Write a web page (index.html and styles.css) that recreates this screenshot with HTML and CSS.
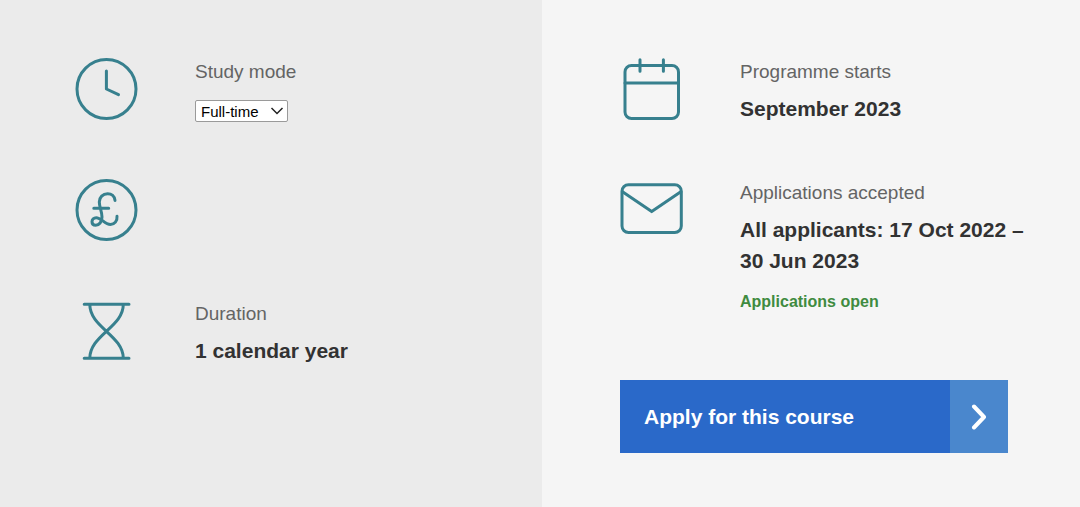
FILE: index.html
```html
<!DOCTYPE html>
<html lang="en">
<head>
<meta charset="utf-8">
<meta name="viewport" content="width=device-width, initial-scale=1">
<title>Course key facts</title>
<link rel="stylesheet" href="styles.css">
</head>
<body>
<main class="facts">
  <section class="panel panel-left">
    <div class="fact">
      <svg class="icon" viewBox="0 0 62 62" aria-hidden="true"><circle cx="31.5" cy="31" r="29.5"/><path d="M31.4 13V31L43.5 36.7"/></svg>
      <div class="detail">
        <label class="label" for="mode">Study mode</label>
        <div class="select-wrap">
          <select class="select" id="mode"><option>Full-time</option><option>Part-time</option></select>
          <svg class="caret" viewBox="0 0 14 8" aria-hidden="true"><path d="M1.5 1L7 6.5L12.5 1"/></svg>
        </div>
      </div>
    </div>
    <div class="fact">
      <svg class="icon" viewBox="0 0 62 62" aria-hidden="true"><circle cx="31.5" cy="31" r="29.5"/><path d="M40 21.4C39.6 17.2 36.6 14.7 32.6 14.7C27.8 14.7 24.3 18.3 24.3 23C24.3 28 27 32.5 27 38C27 43 24 46.3 20.7 46.3C18.5 46.3 17 44.8 17 42.7C17 40.4 18.8 38.7 21.2 38.7C26.5 38.7 29.5 45.5 35.5 45.5C39.5 45.5 42.5 42 42 37.3M18.8 29.3H33.7"/></svg>
    </div>
    <div class="fact">
      <svg class="icon" viewBox="0 0 62 62" aria-hidden="true"><path d="M9.2 4.3H54M9.2 58.3H54M14.8 4.3C14.8 16 23 23.5 31.4 31.3C39.8 39 48.3 47 48.3 58.3M48.3 4.3C48.3 16 39.8 23.5 31.4 31.3C23 39 14.8 47 14.8 58.3"/></svg>
      <div class="detail">
        <p class="label">Duration</p>
        <p class="value">1 calendar year</p>
      </div>
    </div>
  </section>
  <section class="panel panel-right">
    <div class="fact">
      <svg class="icon" viewBox="0 0 62 62" aria-hidden="true"><rect x="5" y="7.5" width="53.5" height="53" rx="6.5"/><path d="M5 25H58.5M20 1.7V13.2M43.4 1.7V13.2"/></svg>
      <div class="detail">
        <p class="label">Programme starts</p>
        <p class="value">September 2023</p>
      </div>
    </div>
    <div class="fact">
      <svg class="icon" viewBox="0 0 62 62" aria-hidden="true"><rect x="2" y="5.7" width="59.3" height="47.8" rx="6.5"/><path d="M2.5 12.8L31.7 32.6L60.8 12.8"/></svg>
      <div class="detail">
        <p class="label">Applications accepted</p>
        <p class="value">All applicants: 17 Oct 2022 – 30 Jun 2023</p>
        <p class="status">Applications open</p>
      </div>
    </div>
    <a class="apply" href="#apply">
      <span class="apply-text">Apply for this course</span>
      <span class="apply-arrow"><svg class="chevron" viewBox="0 0 16 26" aria-hidden="true"><path d="M3 2.500L13 13L3 23.500"/></svg></span>
    </a>
  </section>
</main>
</body>
</html>
```
FILE: styles.css
```css
* {
  box-sizing: border-box;
}

body {
  margin: 0;
  background: #fff;
  color: #323232;
  font-family: "Liberation Sans", Arial, sans-serif;
}

p {
  margin: 0;
}

.facts {
  display: grid;
  grid-template-columns: 271fr 269fr;
}

.panel {
  display: flex;
  flex-direction: column;
  gap: 55px;
  padding: 58px 48px 54px 75px;
}

.panel-left {
  background: #ebebeb;
}

.panel-right {
  padding-left: 78px;
  background: #f5f5f5;
}

.fact {
  display: grid;
  grid-template-columns: 62px 1fr;
  gap: 58px;
  min-height: 66px;
}

.icon {
  width: 62px;
  height: 62px;
  overflow: visible;
  fill: none;
  stroke: #37808e;
  stroke-width: 3;
  stroke-linecap: round;
  stroke-linejoin: round;
}

.label {
  display: block;
  color: #646464;
  font-size: 19px;
  line-height: 27px;
}

.value {
  margin-top: 8px;
  font-size: 21px;
  font-weight: bold;
  line-height: 31px;
}

.status {
  margin-top: 16px;
  color: #3f8b40;
  font-size: 16px;
  font-weight: bold;
  line-height: 20px;
}

.select-wrap {
  position: relative;
  width: 93px;
  margin-top: 15px;
}

.select {
  display: block;
  width: 100%;
  height: 22px;
  padding: 0 0 0 5px;
  border: 1px solid #9a9a9a;
  border-radius: 2px;
  appearance: none;
  background: #fff;
  color: #000;
  font-family: inherit;
  font-size: 15px;
}

.caret {
  position: absolute;
  top: 7px;
  right: 4px;
  width: 14px;
  height: 8px;
  fill: none;
  stroke: #222;
  stroke-width: 1.5;
  pointer-events: none;
}

.apply {
  display: flex;
  width: 100%;
  max-width: 388px;
  min-height: 73px;
  margin-top: 13px;
  background: #2a69c9;
  color: #fff;
  font-size: 21px;
  font-weight: bold;
  text-decoration: none;
}

.apply-text {
  flex: 1;
  align-self: center;
  padding-left: 24px;
}

.apply-arrow {
  display: grid;
  place-items: center;
  width: 58px;
  background: #4a87cd;
}

.chevron {
  width: 16px;
  height: 26px;
  fill: none;
  stroke: #fff;
  stroke-width: 4;
  stroke-linecap: round;
  stroke-linejoin: round;
}
```
